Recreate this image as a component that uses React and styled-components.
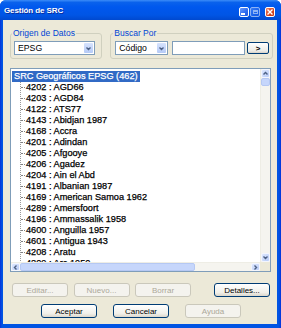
import React from 'react';
import styled, { createGlobalStyle } from 'styled-components';

const GlobalStyle = createGlobalStyle`
  html, body {
    margin: 0;
    padding: 0;
    background: #ffffff;
  }
  body {
    font-family: "Liberation Sans", Arial, sans-serif;
  }
`;

const items = [
  '4202 : AGD66',
  '4203 : AGD84',
  '4122 : ATS77',
  '4143 : Abidjan 1987',
  '4168 : Accra',
  '4201 : Adindan',
  '4205 : Afgooye',
  '4206 : Agadez',
  '4204 : Ain el Abd',
  '4191 : Albanian 1987',
  '4169 : American Samoa 1962',
  '4289 : Amersfoort',
  '4196 : Ammassalik 1958',
  '4600 : Anguilla 1957',
  '4601 : Antigua 1943',
  '4208 : Aratu',
  '4209 : Arc 1950',
];

const Chevron = ({ dir = 'down', size = 7 }) => {
  const paths = {
    down: 'M1.5 2.5 L3.5 4.5 L5.5 2.5',
    up: 'M1.5 4.5 L3.5 2.5 L5.5 4.5',
    left: 'M4.5 1.5 L2.5 3.5 L4.5 5.5',
    right: 'M2.5 1.5 L4.5 3.5 L2.5 5.5',
  };
  return (
    <svg width={size} height={size} viewBox="0 0 7 7">
      <path d={paths[dir]} fill="none" stroke="#4D6185" strokeWidth="1.4" />
    </svg>
  );
};

const App = () => {
  return (
    <>
      <GlobalStyle />
      <Window>
        <TitleBar>
          <Title>Gestión de SRC</Title>
          <Controls>
            <CtrlButton>
              <MinGlyph />
            </CtrlButton>
            <CtrlButton faded>
              <MaxGlyph />
            </CtrlButton>
            <CtrlButton close>
              <svg width="6" height="6" viewBox="0 0 6 6">
                <path d="M0.5 0.5 L5.5 5.5 M5.5 0.5 L0.5 5.5" stroke="#fff" strokeWidth="1.4" />
              </svg>
            </CtrlButton>
          </Controls>
        </TitleBar>

        <Body>
          <TopRow>
            <Group width={93} padLeft={3}>
              <Legend>Origen de Datos</Legend>
              <Select width={81}>
                <span>EPSG</span>
                <DropButton><Chevron /></DropButton>
              </Select>
            </Group>
            <Group width={164} padLeft={4}>
              <Legend>Buscar Por</Legend>
              <SearchRow>
                <Select width={53}>
                  <span>Código</span>
                  <DropButton><Chevron /></DropButton>
                </Select>
                <TextInput />
                <GoButton>&gt;</GoButton>
              </SearchRow>
            </Group>
          </TopRow>

          <ListBox>
            <TreeArea>
              <RootNode>SRC Geográficos EPSG (462)</RootNode>
              <Children>
                {items.map((item) => (
                  <TreeItem key={item}>
                    <Connector />
                    <span>{item}</span>
                  </TreeItem>
                ))}
              </Children>
            </TreeArea>
            <VScroll>
              <ScrollButton><Chevron dir="up" /></ScrollButton>
              <Thumb vertical />
              <Track />
              <ScrollButton><Chevron dir="down" /></ScrollButton>
            </VScroll>
            <HScroll>
              <ScrollButton><Chevron dir="left" /></ScrollButton>
              <Thumb style={{ width: '175px' }} />
              <Track />
              <ScrollButton><Chevron dir="right" /></ScrollButton>
            </HScroll>
            <Corner />
          </ListBox>

          <ActionRow>
            <Button disabled>Editar...</Button>
            <Button disabled>Nuevo...</Button>
            <Button disabled>Borrar</Button>
            <span />
            <Button>Detalles...</Button>
          </ActionRow>
          <DialogRow>
            <Button>Aceptar</Button>
            <Button>Cancelar</Button>
            <Button disabled>Ayuda</Button>
          </DialogRow>
        </Body>
      </Window>
    </>
  );
};

const Window = styled.div`
  width: 281px;
  height: 328px;
  box-sizing: border-box;
  display: flex;
  flex-direction: column;
  background: linear-gradient(to right, #0831D9, #0054E3 2px, #0054E3 calc(100% - 2px), #0831D9);
  border-radius: 6px 6px 0 0;
  overflow: hidden;
`;

const TitleBar = styled.div`
  height: 20px;
  flex-shrink: 0;
  display: flex;
  align-items: center;
  justify-content: space-between;
  padding: 0 6px 0 4px;
  background: linear-gradient(
    to bottom,
    #3C8CF8 0%,
    #0A62EC 12%,
    #0058EE 35%,
    #0055E5 75%,
    #0049CF 100%
  );
`;

const Title = styled.div`
  color: #ffffff;
  font-weight: bold;
  font-size: 8px;
  text-shadow: 1px 1px 0 #0A2C9C;
  letter-spacing: -0.1px;
`;

const Controls = styled.div`
  display: flex;
  align-items: center;
  gap: 1px;
  margin-top: 3px;
`;

const CtrlButton = styled.div`
  width: 10px;
  height: 10px;
  box-sizing: border-box;
  border: 1px solid #ffffff;
  border-radius: 2px;
  display: flex;
  align-items: center;
  justify-content: center;
  background: ${(p) =>
    p.close
      ? 'linear-gradient(135deg, #E9826A, #D6441E 60%, #C23A17)'
      : 'linear-gradient(135deg, #6B9BFA, #2E6CF0 60%, #1F5ADF)'};
  opacity: ${(p) => (p.faded ? 0.55 : 1)};
  margin-left: ${(p) => (p.close ? '4px' : '0')};
`;

const MinGlyph = styled.div`
  width: 4px;
  height: 2px;
  background: #ffffff;
  margin: 4px 2px 0 0;
`;

const MaxGlyph = styled.div`
  width: 5px;
  height: 4px;
  box-sizing: border-box;
  border: 1px solid #ffffff;
  border-top-width: 2px;
`;

const Body = styled.div`
  flex: 1;
  margin: 0 4px 4px 3px;
  background: #ECE9D8;
  padding: 8px 4px 0 7px;
  display: flex;
  flex-direction: column;
`;

const TopRow = styled.div`
  display: flex;
  gap: 8px;
`;

const Group = styled.fieldset`
  margin: 0;
  width: ${(p) => p.width}px;
  box-sizing: border-box;
  min-width: 0;
  border: 1px solid #D0D0BF;
  border-radius: 3px;
  padding: 3px 3px 3px ${(p) => p.padLeft}px;
`;

const Legend = styled.legend`
  padding: 0 1px;
  margin-left: -2px;
  font-size: 8.5px;
  line-height: 10px;
  color: #0046D5;
`;

const SearchRow = styled.div`
  display: flex;
  align-items: center;
`;

const Select = styled.div`
  width: ${(p) => p.width}px;
  height: 14px;
  box-sizing: border-box;
  border: 1px solid #7F9DB9;
  background: #ffffff;
  display: flex;
  align-items: center;
  justify-content: space-between;
  padding: 1px;
  font-size: 8.7px;
  color: #000;

  span {
    padding-left: 2px;
  }
`;

const DropButton = styled.div`
  width: 9px;
  height: 100%;
  border-radius: 1px;
  display: flex;
  align-items: center;
  justify-content: center;
  background: linear-gradient(to bottom, #D7E3FD, #B5CAF7);
`;

const TextInput = styled.div`
  width: 73px;
  height: 14px;
  box-sizing: border-box;
  margin-left: 4px;
  border: 1px solid #7F9DB9;
  background: #ffffff;
`;

const GoButton = styled.div`
  width: 22px;
  height: 12px;
  box-sizing: border-box;
  margin-left: 2px;
  border: 1px solid #003C74;
  border-radius: 2px;
  background: linear-gradient(to bottom, #ffffff, #ECEBE6 80%, #D6D0C5);
  display: flex;
  align-items: center;
  justify-content: center;
  font-size: 8px;
  font-weight: bold;
  color: #000;
`;

const ListBox = styled.div`
  margin-top: 9px;
  width: 261px;
  height: 204px;
  box-sizing: border-box;
  border: 1px solid #7F9DB9;
  background: #ffffff;
  display: grid;
  grid-template-columns: 1fr 10px;
  grid-template-rows: 1fr 9px;
  overflow: hidden;
`;

const TreeArea = styled.div`
  overflow: hidden;
  padding: 2px 0 0 1px;
  font-size: 9.2px;
  color: #000;
  -webkit-text-stroke: 0.25px #000;
`;

const RootNode = styled.div`
  display: inline-block;
  height: 11px;
  line-height: 11px;
  padding: 0 2px;
  background: #316AC5;
  color: #ffffff;
  -webkit-text-stroke: 0.25px #ffffff;
  white-space: nowrap;
`;

const Children = styled.div`
  margin-left: 8px;
  border-left: 1px dotted #9A9A9A;
`;

const TreeItem = styled.div`
  height: 11px;
  line-height: 11px;
  display: flex;
  align-items: center;
  white-space: nowrap;
`;

const Connector = styled.span`
  width: 4px;
  border-top: 1px dotted #808080;
  margin-right: 1px;
  flex-shrink: 0;
`;

const VScroll = styled.div`
  display: flex;
  flex-direction: column;
  background: #F5F4EF;
  border-left: 1px solid #EEEDE5;
`;

const HScroll = styled.div`
  display: flex;
  background: #F5F4EF;
  border-top: 1px solid #EEEDE5;
`;

const ScrollButton = styled.div`
  flex: 0 0 9px;
  min-width: 9px;
  min-height: 8px;
  box-sizing: border-box;
  border-radius: 2px;
  border: 1px solid #F3F6FE;
  background: linear-gradient(135deg, #DDE7FE, #BACDF8);
  display: flex;
  align-items: center;
  justify-content: center;
`;

const Thumb = styled.div`
  flex: 0 0 auto;
  ${(p) => (p.vertical ? 'height: 8px;' : '')}
  box-sizing: border-box;
  border-radius: 2px;
  border: 1px solid #B5C8F3;
  background: #C6D6FB;
`;

const Track = styled.div`
  flex: 1;
`;

const Corner = styled.div`
  background: #ECE9D8;
`;

const ActionRow = styled.div`
  margin-top: 11px;
  width: 258px;
  padding-left: 2px;
  display: grid;
  grid-template-columns: 56px 56px 56px 1fr 56px;
  column-gap: 5.5px;
`;

const DialogRow = styled.div`
  margin-top: 7px;
  padding-left: 31px;
  display: flex;
  gap: 16px;

  button {
    width: 56px;
  }
`;

const Button = styled.button`
  height: 14px;
  padding: 0;
  box-sizing: border-box;
  border: 1px solid #003C74;
  border-radius: 3px;
  background: linear-gradient(to bottom, #ffffff, #F1F0EA 70%, #DCD7CC);
  font-family: "Liberation Sans", Arial, sans-serif;
  font-size: 8px;
  color: #000;

  &:disabled {
    border-color: #CAC8BB;
    background: #F4F3EE;
    color: #ACA899;
  }
`;

export default App;
